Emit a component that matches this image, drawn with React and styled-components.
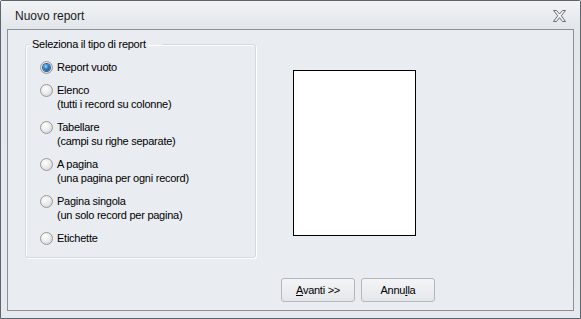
import React from 'react';
import styled, { createGlobalStyle } from 'styled-components';

const GlobalStyle = createGlobalStyle`
  html, body {
    margin: 0;
    padding: 0;
    background: #e9ecf0;
  }
  body {
    font-family: 'Liberation Sans', Arial, sans-serif;
    font-size: 11px;
    color: #000;
  }
`;

const choices = [
  { label: 'Report vuoto', checked: true },
  { label: 'Elenco', note: '(tutti i record su colonne)' },
  { label: 'Tabellare', note: '(campi su righe separate)' },
  { label: 'A pagina', note: '(una pagina per ogni record)' },
  { label: 'Pagina singola', note: '(un solo record per pagina)' },
  { label: 'Etichette' },
];

const CloseIcon = () => (
  <svg width="13" height="12" viewBox="0 0 13 12">
    <polygon
      points="0.5,0.5 3.5,0.5 6.5,4 9.5,0.5 12.5,0.5 8.3,5.8 12.5,11.5 9.5,11.5 6.5,7.6 3.5,11.5 0.5,11.5 4.7,5.8"
      fill="#f4f5f7"
      stroke="#5a5e63"
      strokeWidth="0.9"
    />
  </svg>
);

export default function App() {
  return (
    <>
      <GlobalStyle />
      <Window>
        <TitleBar>
          <Title>Nuovo report</Title>
          <CloseButton>
            <CloseIcon />
          </CloseButton>
        </TitleBar>
        <Client>
          <TopRow>
            <Group>
              <Legend>Seleziona il tipo di report</Legend>
              <ChoiceList>
                {choices.map((c) => (
                  <Choice key={c.label}>
                    <Radio $checked={c.checked} />
                    <ChoiceText>
                      <div>{c.label}</div>
                      {c.note && <div>{c.note}</div>}
                    </ChoiceText>
                  </Choice>
                ))}
              </ChoiceList>
            </Group>
            <Preview />
          </TopRow>
          <Footer>
            <Button>
              <u>A</u>vanti &gt;&gt;
            </Button>
            <Button>
              Annu<u>l</u>la
            </Button>
          </Footer>
        </Client>
      </Window>
    </>
  );
}

const Window = styled.div`
  box-sizing: border-box;
  width: 581px;
  height: 319px;
  border: 1px solid #5b6570;
  border-radius: 2px 2px 0 0;
  background: linear-gradient(#eef0f3, #e4e8ec 30px, #e6e9ed);
  display: flex;
  flex-direction: column;
`;

const TitleBar = styled.div`
  height: 28px;
  display: flex;
  align-items: center;
  padding: 0 14px;
  background: linear-gradient(#f1f3f5, #e2e6eb);
`;

const Title = styled.div`
  flex: 1;
  font-size: 12px;
  color: #1a1a1a;
  padding-top: 2px;
`;

const CloseButton = styled.div`
  display: flex;
  align-items: center;
  margin-top: 2px;
`;

const Client = styled.div`
  flex: 1;
  margin: 0 6px 7px 6px;
  border: 1px solid #8b9096;
  background: #e9ecf0;
  display: flex;
  flex-direction: column;
  padding: 8px 0 0 17px;
  letter-spacing: -0.25px;
`;

const TopRow = styled.div`
  display: flex;
  align-items: flex-start;
`;

const Group = styled.fieldset`
  box-sizing: border-box;
  width: 231px;
  height: 220px;
  margin: 0;
  padding: 0 0 0 14px;
  border: 1px solid #d3dbe2;
  border-radius: 3px;
  box-shadow: inset 1px 1px 0 #fff, 1px 1px 0 #fff;
`;

const Legend = styled.legend`
  margin-left: 4px;
  padding: 0 2px;
  line-height: 13px;
  background: #e9ecf0;
  position: relative;
  left: -14px;
`;

const ChoiceList = styled.div`
  display: flex;
  flex-direction: column;
  gap: 8px;
  padding-top: 9px;
`;

const Choice = styled.div`
  display: flex;
  align-items: flex-start;
  gap: 4px;
`;

const Radio = styled.span`
  box-sizing: border-box;
  width: 13px;
  height: 13px;
  margin-top: 1px;
  border-radius: 50%;
  border: 1px solid #969a9f;
  background: radial-gradient(circle at 40% 35%, #ffffff 0%, #ececec 45%, #c9c9c9 100%);
  display: flex;
  align-items: center;
  justify-content: center;

  &::after {
    content: '';
    width: 7px;
    height: 7px;
    border-radius: 50%;
    display: ${(p) => (p.$checked ? 'block' : 'none')};
    background: radial-gradient(circle at 40% 35%, #a6d4f7 0%, #2a82cf 40%, #0f3f7a 100%);
    box-shadow: 0 0 0 1px #3b5c7e;
  }
`;

const ChoiceText = styled.div`
  line-height: 14.5px;
`;

const Preview = styled.div`
  box-sizing: border-box;
  width: 123px;
  height: 166px;
  margin: 32px 0 0 37px;
  background: #fff;
  border: 1px solid #000;
`;

const Footer = styled.div`
  display: flex;
  gap: 6px;
  margin-top: 20px;
  padding-left: 256px;
`;

const Button = styled.button`
  box-sizing: border-box;
  width: 74px;
  height: 24px;
  padding: 0;
  font-family: 'Liberation Sans', Arial, sans-serif;
  font-size: 11px;
  letter-spacing: -0.25px;
  color: #000;
  border: 1px solid #b3b7bb;
  border-radius: 3px;
  background: linear-gradient(#f3f4f6, #eceef1 50%, #e4e7ea);
`;
